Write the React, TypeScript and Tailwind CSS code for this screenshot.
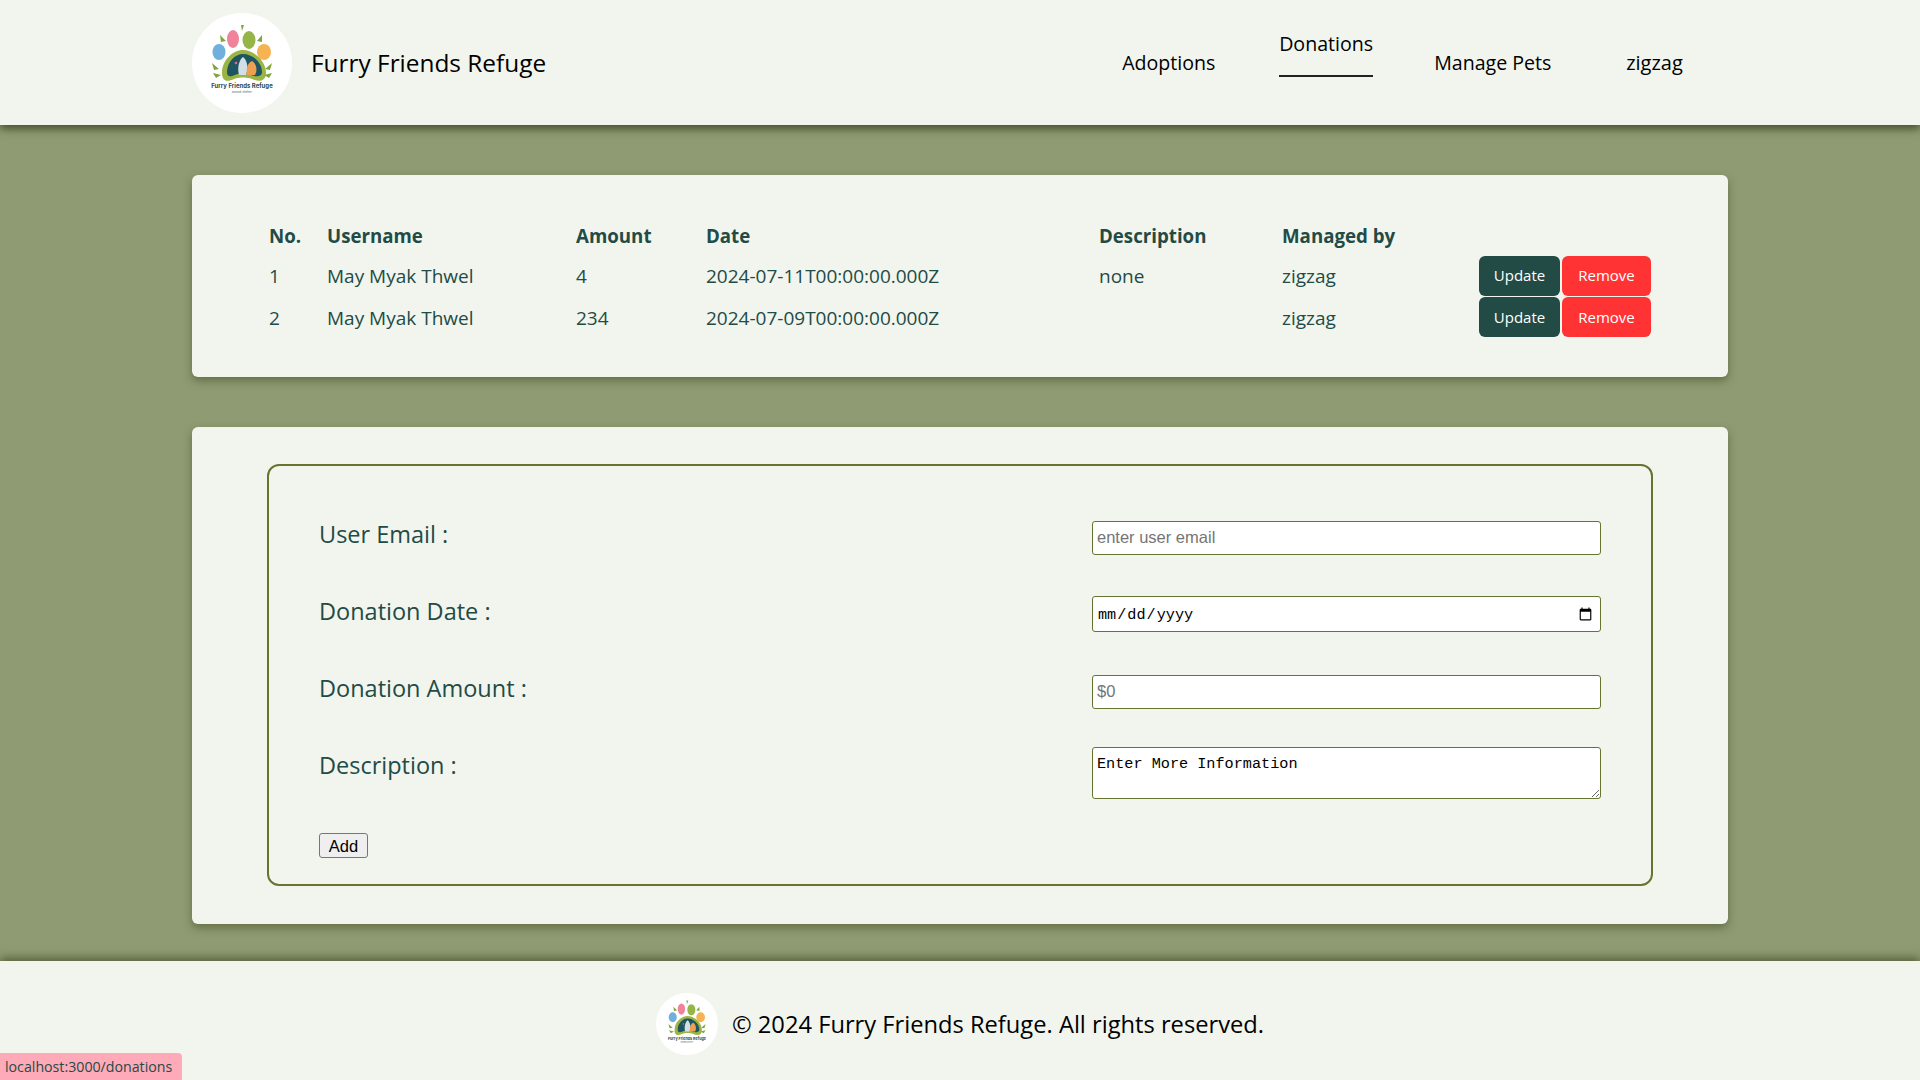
const uiFont = "font-['Open_Sans','Noto_Sans',sans-serif]";

const donations = [
  { no: 1, username: 'May Myak Thwel', amount: 4, date: '2024-07-11T00:00:00.000Z', description: 'none', manager: 'zigzag' },
  { no: 2, username: 'May Myak Thwel', amount: 234, date: '2024-07-09T00:00:00.000Z', description: '', manager: 'zigzag' },
];

function Logo({ className }: { className: string }) {
  return (
    <svg viewBox="0 0 100 100" className={className}>
      <circle cx="50" cy="50" r="50" fill="#ffffff" />
      {/* toes */}
      <ellipse cx="41" cy="26" rx="6" ry="9" fill="#f0829c" />
      <ellipse cx="57" cy="27" rx="6.5" ry="9" fill="#95b548" />
      <ellipse cx="27" cy="39" rx="6.5" ry="8" fill="#6fb0dc" />
      <ellipse cx="72" cy="39" rx="7" ry="8" fill="#f5b352" />
      {/* pad */}
      <path d="M30 60C30 47 41 37 51 37C61 37 74 47 74 60C74 69 66 69 60 66C55 64 47 64 42 66C36 69 30 69 30 60Z" fill="#9bb544" />
      <path d="M35 59C35 49 43 41 51 41C60 41 70 49 70 59C70 64 64 64 59 62C54 60 47 60 43 62C38 64 35 64 35 59Z" fill="#1f5560" />
      <path d="M47 62C45 55 47 47 51 44C55 47 57 55 54 62Z" fill="#d3dfe6" />
      <path d="M55 62C54 57 55 50 60 48C64 50 66 57 63 62Z" fill="#ee9f4f" />
      <circle cx="44" cy="50" r="1.3" fill="#f0608a" />
      {/* leaves */}
      <path d="M20 50L27 56L22 57ZM21 60L29 62L24 65ZM80 50L73 56L78 57ZM80 60L72 62L77 65ZM28 22L34 28L29 29ZM70 22L65 28L70 29ZM49 12L50 18L52 12Z" fill="#7fa63c" />
      <text x="50" y="75" textAnchor="middle" fontSize="6" fontWeight="700" fill="#2f4a4a" fontFamily="Inter, sans-serif">Furry Friends Refuge</text>
      <text x="50" y="80" textAnchor="middle" fontSize="3" fill="#55696a" fontFamily="Inter, sans-serif">animal shelter</text>
    </svg>
  );
}

function FormRow({ label, children }: { label: string; children: React.ReactNode }) {
  return (
    <div className="flex items-start justify-between h-[77px]">
      <label className="-mt-[2px] text-[23.5px] leading-[33px] text-[#224b46]">{label}</label>
      {children}
    </div>
  );
}

export default function App() {
  const inputClass =
    'w-[509px] border border-[#64752f] rounded-[3px] bg-white px-[4px] text-black placeholder:text-[#757575] outline-none';
  const sansInput = "text-[16.5px] font-['Liberation_Sans',sans-serif] pb-[2px]";
  const monoInput = "text-[15.2px] font-['Liberation_Mono',monospace]";

  return (
    <div className={`h-screen overflow-hidden flex flex-col bg-[#8f9b72] ${uiFont}`}>
      <header className="relative z-10 h-[125px] shrink-0 bg-[#f2f5ee] shadow-[0_4px_8px_rgba(40,50,20,0.7)] pl-[192px] flex items-center">
        <Logo className="w-[100px] h-[100px]" />
        <span className="ml-[19px] mt-[2px] text-[24.4px] font-medium text-black">Furry Friends Refuge</span>
        <nav className="ml-[576px] flex items-center text-[19.6px] text-black">
          <a className="w-[157px]">Adoptions</a>
          <a className="w-[94px] h-[46px] -mt-[17px] mr-[61px] border-b-2 border-[#222] box-border leading-[26px] whitespace-nowrap">Donations</a>
          <a className="w-[192px]">Manage Pets</a>
          <a className="mt-[1px] text-[20px]">zigzag</a>
        </nav>
      </header>

      <main className="flex-1 px-[192px] pt-[50px]">
        <section className="h-[202px] rounded-[6px] bg-[#f2f5ee] shadow-[0_4px_8px_rgba(60,70,30,0.5)] pl-[77px] pt-[45px]">
          <table className="text-[19px] leading-[25px] text-[#224b46] text-left">
            <thead>
              <tr className="h-[35px] text-[18.7px] font-bold">
                <th className="w-[58px] pb-[5px]">No.</th>
                <th className="w-[249px] pb-[5px]">Username</th>
                <th className="w-[130px] pb-[5px]">Amount</th>
                <th className="w-[393px] pb-[5px]">Date</th>
                <th className="w-[183px] pb-[5px]">Description</th>
                <th className="w-[197px] pb-[5px]">Managed by</th>
                <th></th>
              </tr>
            </thead>
            <tbody>
              {donations.map((d) => (
                <tr key={d.no} className="h-[41.5px]">
                  <td className="pt-[2px]">{d.no}</td>
                  <td className="pt-[2px]">{d.username}</td>
                  <td className="pt-[2px]">{d.amount}</td>
                  <td className="pt-[2px]">{d.date}</td>
                  <td className="pt-[2px]">{d.description}</td>
                  <td className="pt-[2px]">{d.manager}</td>
                  <td>
                    <div className="flex gap-[2px] text-[15px] text-white">
                      <button className="w-[81px] h-[40px] rounded-[6px] bg-[#224b46]">Update</button>
                      <button className="w-[89px] h-[40px] rounded-[6px] bg-[#ff3333]">Remove</button>
                    </div>
                  </td>
                </tr>
              ))}
            </tbody>
          </table>
        </section>

        <section className="mt-[50px] h-[497px] rounded-[6px] bg-[#f2f5ee] shadow-[0_4px_8px_rgba(60,70,30,0.5)] pt-[37px] pl-[75px]">
          <form className="w-[1386px] h-[422px] border-2 border-[#64752f] rounded-[12px] px-[50px] pt-[54px]">
            <FormRow label="User Email :">
              <input type="text" placeholder="enter user email" className={`${inputClass} ${sansInput} h-[34px] mt-[1px]`} />
            </FormRow>
            <FormRow label="Donation Date :">
              <input type="date" className={`${inputClass} ${monoInput} h-[36px] -mt-[1px] pt-[2px] pr-[5px]`} />
            </FormRow>
            <FormRow label="Donation Amount :">
              <input type="text" placeholder="$0" className={`${inputClass} ${sansInput} h-[34px] mt-[1px]`} />
            </FormRow>
            <FormRow label="Description :">
              <textarea
                defaultValue="Enter More Information"
                className={`${inputClass} ${monoInput} h-[52px] -mt-[4px] pt-[7px] leading-[18px]`}
              />
            </FormRow>
            <button type="button" className="block mt-[5px] w-[49px] h-[25px] pb-[2px] border border-[#767676] rounded-[3px] bg-[#efefef] text-[16.5px] font-['Liberation_Sans',sans-serif] text-black">
              Add
            </button>
          </form>
        </section>
      </main>

      <footer className="relative h-[119px] shrink-0 bg-[#f2f5ee] shadow-[0_-4px_8px_rgba(60,70,30,0.6)] flex items-center justify-center pt-[7px]">
        <Logo className="w-[62px] h-[62px]" />
        <span className="ml-[14px] mt-[2px] text-[23.7px] text-black">© 2024 Furry Friends Refuge. All rights reserved.</span>
        <div className="absolute left-0 bottom-0 h-[27px] w-[182px] rounded-tr-[4px] bg-[#ffaab8] pl-[5px] text-[14.2px] leading-[27px] text-[#224b46]">
          localhost:3000/donations
        </div>
      </footer>
    </div>
  );
}
